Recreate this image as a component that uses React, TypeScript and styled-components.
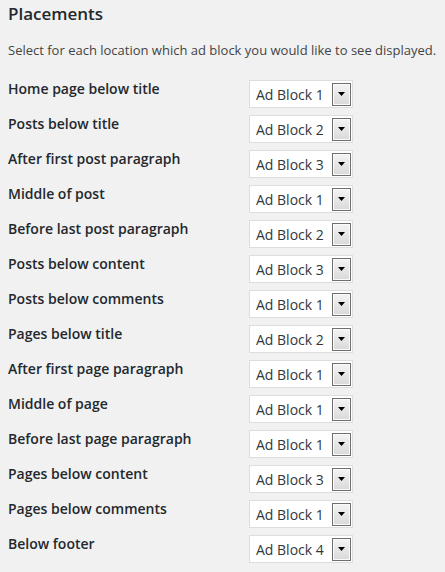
import React from "react";
import styled, { createGlobalStyle } from "styled-components";

const Global = createGlobalStyle`
  html, body { margin: 0; padding: 0; background: #f1f1f1; }
  body { font-family: "Open Sans", sans-serif; color: #444; }
`;

const Page = styled.div`
  padding: 0 8px;
`;

const Title = styled.h2`
  margin: 0;
  padding-top: 2px;
  font-size: 17px;
  line-height: 24px;
  font-weight: 600;
  color: #23282d;
`;

const Intro = styled.p`
  margin: 13px 0 0;
  font-size: 13px;
  line-height: 22px;
  color: #444;
`;

const Table = styled.div`
  display: grid;
  grid-template-columns: 241px auto;
  margin-top: 18px;
`;

const Label = styled.div`
  font-size: 14px;
  font-weight: 600;
  color: #23282d;
  line-height: 19px;
  height: 35px;
  box-sizing: border-box;
`;

const SelectBox = styled.div`
  width: 104px;
  height: 28px;
  box-sizing: border-box;
  border: 1px solid #ddd;
  background: #fff;
  display: flex;
  align-items: center;
  justify-content: space-between;
  padding: 0 1px 0 6px;
  font-size: 14px;
  color: #32373c;
  margin-top: 1px;
  justify-self: start;
`;

const Arrow = styled.div`
  width: 19px;
  height: 23px;
  box-sizing: border-box;
  border: 1px solid #6f6f6f;
  box-shadow: inset 0 0 0 1px #fafafa;
  background: linear-gradient(#f4f4f4, #d9d9d9);
  display: flex;
  align-items: center;
  justify-content: center;
`;

const rows: [string, number][] = [
  ["Home page below title", 1],
  ["Posts below title", 2],
  ["After first post paragraph", 3],
  ["Middle of post", 1],
  ["Before last post paragraph", 2],
  ["Posts below content", 3],
  ["Posts below comments", 1],
  ["Pages below title", 2],
  ["After first page paragraph", 1],
  ["Middle of page", 1],
  ["Before last page paragraph", 1],
  ["Pages below content", 3],
  ["Pages below comments", 1],
  ["Below footer", 4],
];

export default function App() {
  return (
    <Page>
      <Global />
      <Title>Placements</Title>
      <Intro>Select for each location which ad block you would like to see displayed.</Intro>
      <Table>
        {rows.map(([label, n]) => (
          <React.Fragment key={label}>
            <Label>{label}</Label>
            <SelectBox>
              <span>Ad Block {n}</span>
              <Arrow>
                <svg width="7" height="4" viewBox="0 0 7 4">
                  <path d="M0 0h7L3.5 4z" fill="#000" />
                </svg>
              </Arrow>
            </SelectBox>
          </React.Fragment>
        ))}
      </Table>
    </Page>
  );
}
